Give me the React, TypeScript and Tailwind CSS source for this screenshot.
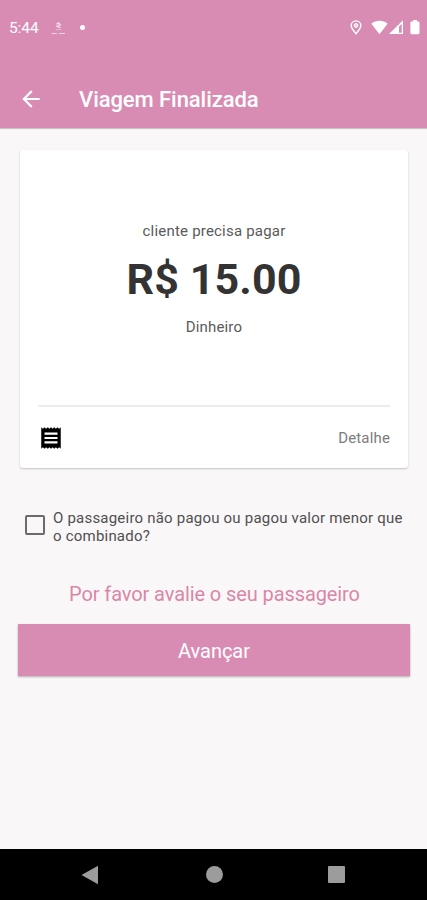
import { MdArrowBack, MdReceipt } from "react-icons/md";

function StatusBar() {
  return (
    <div className="flex h-[55px] items-center pl-[9px] pr-[7px] text-white">
      <span className="w-[30px] whitespace-nowrap pt-[2px] text-[15.5px] tracking-[-0.1px]">5:44</span>
      <svg className="ml-[12px] h-[14px] w-[15px]" viewBox="0 0 15 14" fill="none" stroke="white">
        <path d="M5.5 3.2 7.6 2 9.2 3.6 7.2 5.4M5.2 5 9.4 6.6" strokeWidth="1.5" opacity="0.65" />
        <path d="M4.5 8c2 1 4 1 6 0" strokeWidth="0.9" opacity="0.4" />
        <path d="M0.5 12.5H6M8 12.5h6" opacity="0.6" />
      </svg>
      <span className="ml-[14px] h-[5px] w-[5px] rounded-full bg-white" />
      <div className="ml-auto flex items-center">
        <svg className="h-[15px] w-[12px]" viewBox="0 0 12 15" fill="none" stroke="white">
          <path d="M6 13.7C3.4 10.5 1.2 8.2 1.2 5.7a4.8 4.8 0 0 1 9.6 0C10.8 8.2 8.6 10.5 6 13.7z" strokeWidth="1.4" />
          <circle cx="6" cy="5.5" r="1.9" fill="white" fillOpacity="0.6" strokeWidth="1" />
        </svg>
        <svg className="ml-[9px] h-[15px] w-[17px]" viewBox="0 0 17 15" fill="white">
          <path d="M0.4 3.7C5 -0.1 12 -0.1 16.6 3.7L8.5 14.2z" />
        </svg>
        <svg className="ml-px h-[15px] w-[14px]" viewBox="0 0 14 15">
          <path d="M0 14.1 14 0.2V14.1z" fill="white" />
          <path d="M10 6.5 12.7 3.7V12.8H10z" fill="#d98cb3" />
        </svg>
        <svg className="ml-[7px] h-[15px] w-[10px]" viewBox="0 0 10 15" fill="white">
          <path d="M3 0h4v1.4h1.4q1.1 0 1.1 1.1v10.6q0 1.1-1.1 1.1H1.5q-1.1 0-1.1-1.1V2.5q0-1.1 1.1-1.1H3z" />
        </svg>
      </div>
    </div>
  );
}

function Header() {
  return (
    <header className="h-[128px] bg-[#d98cb3] shadow-[0_1px_1px_rgba(0,0,0,0.2)]">
      <StatusBar />
      <div className="flex h-[87px] items-center pl-[18px] text-white">
        <MdArrowBack className="h-[26px] w-[26px]" />
        <h1 className="ml-[35px] pt-[2px] text-[22px] font-medium tracking-[-0.07px]">Viagem Finalizada</h1>
      </div>
    </header>
  );
}

function PaymentCard() {
  return (
    <section className="ml-[20px] mr-[19px] mt-[22px] flex h-[318px] flex-col rounded-[3px] bg-white px-[18px] shadow-[0_1px_2px_rgba(0,0,0,0.22)]">
      <div className="flex h-[257px] flex-col items-center border-b-2 border-[#ececec] pt-[70px] text-[#5a5a5a]">
        <p className="text-[15px] leading-[22px] tracking-[0.2px]">cliente precisa pagar</p>
        <p className="mt-[9px] text-[43px] font-bold leading-[56px] tracking-[0.1px] text-[#333]">R$ 15.00</p>
        <p className="mt-[9px] text-[15px] leading-[22px] tracking-[0.15px]">Dinheiro</p>
      </div>
      <div className="flex h-[61px] items-center justify-between">
        <MdReceipt className="h-[26px] w-[26px] text-black" />
        <span className="pt-[2px] text-[15px] tracking-[0.15px] text-[#7c7c7c]">Detalhe</span>
      </div>
    </section>
  );
}

function NavBar() {
  return (
    <nav className="flex h-[51px] items-center bg-black pl-[81px]">
      <svg className="h-[20px] w-[18px]" viewBox="0 0 18 20" fill="#9c9c9c">
        <path d="M0.5 10 17 0.7V19.3z" />
      </svg>
      <span className="ml-[106.5px] h-[17px] w-[17px] rounded-full bg-[#9c9c9c]" />
      <span className="ml-[105.5px] h-[17px] w-[17px] rounded-[1px] bg-[#9c9c9c]" />
    </nav>
  );
}

export default function App() {
  return (
    <div className="flex h-[900px] w-[427px] flex-col overflow-hidden bg-[#f9f7f8] font-['Roboto',sans-serif]">
      <Header />
      <main className="flex flex-1 flex-col">
        <PaymentCard />
        <label className="mt-[41px] flex items-start pl-[25px] text-[15px] leading-[18px] tracking-[0.21px] text-[#505050]">
          <span className="mt-[6px] h-5 w-5 shrink-0 rounded-[2px] border-2 border-[#6b6b6b]" />
          <span className="ml-[8px] whitespace-nowrap">
            O passageiro não pagou ou pagou valor menor que
            <br />o combinado?
          </span>
        </label>
        <p className="mt-[35px] pl-[2px] text-center text-[20px] leading-[28px] tracking-[-0.1px] text-[#d987a8]">
          Por favor avalie o seu passageiro
        </p>
        <button className="ml-[18px] mr-[17px] mt-[16px] h-[52px] bg-[#d98cb3] pt-px text-[20px] tracking-[-0.05px] text-white shadow-[0_1px_2px_rgba(0,0,0,0.3)]">
          Avançar
        </button>
      </main>
      <NavBar />
    </div>
  );
}
